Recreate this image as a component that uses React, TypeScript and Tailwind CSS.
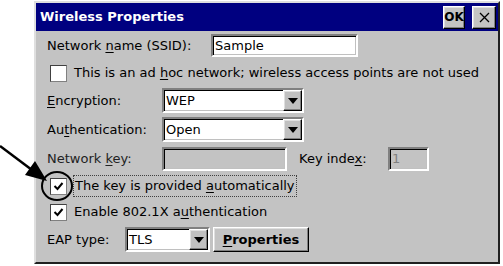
import React from "react";

const font = { fontFamily: '"DejaVu Sans", "Liberation Sans", sans-serif' };

// sunken 3D edit box
const sunken =
  "border-2 border-t-[#808080] border-l-[#808080] border-b-white border-r-white shadow-[inset_1px_1px_0_#000,inset_-1px_-1px_0_#c0c0c0]";
// raised 3D button
const raised =
  "border-t border-l border-t-white border-l-white border-b border-r border-b-black border-r-black shadow-[inset_-1px_-1px_0_#808080,inset_1px_1px_0_#dfdfdf]";

const U = ({ children }: { children: React.ReactNode }) => <span className="underline underline-offset-2">{children}</span>;

const Check = ({ checked }: { checked?: boolean }) => (
  <div className="w-[17px] h-[17px] bg-white flex items-center justify-center border border-t-[#404040] border-l-[#404040] border-b-[#808080] border-r-[#808080]">
    {checked && (
      <svg width="11" height="11" viewBox="0 0 11 11">
        <path d="M1.5 5 L4.5 8 L9.5 2" stroke="#000" strokeWidth="2" fill="none" />
      </svg>
    )}
  </div>
);

const Select = ({ value, width }: { value: string; width: string }) => (
  <div className={`${sunken} ${width} h-[25px] bg-white flex items-center`}>
    <span className="flex-1 pl-[2px] text-black">{value}</span>
    <div className={`${raised} w-[19px] h-full bg-[#c0c0c0] flex items-center justify-center`}>
      <svg width="10" height="6" viewBox="0 0 10 6">
        <path d="M0 0 H10 L5 6 Z" fill="#000" />
      </svg>
    </div>
  </div>
);

export default function App() {
  return (
    <div className="relative w-[503px] h-[266px] bg-white overflow-hidden text-[13px] text-black whitespace-nowrap" style={font}>
      <div className="ml-[34px] mt-[1px] w-[466px] h-[263px] bg-[#c3c3c3] border-2 border-t-[#dfdfdf] border-l-[#dfdfdf] border-b-[#202020] border-r-[#202020] flex flex-col">
        {/* title bar */}
        <div className="h-[28px] bg-[#000080] flex items-center pl-[4px] pr-[2px]">
          <span className="flex-1 text-white font-bold text-[13px]">Wireless Properties</span>
          <div className={`${raised} w-[22px] h-[23px] bg-[#c3c3c3] flex items-center justify-center font-bold text-[12px]`}>OK</div>
          <div className={`${raised} w-[24px] h-[23px] bg-[#c3c3c3] flex items-center justify-center ml-[7px]`}>
            <svg width="11" height="11" viewBox="0 0 11 11">
              <path d="M1 1 L10 10 M10 1 L1 10" stroke="#000" strokeWidth="1.3" />
            </svg>
          </div>
        </div>

        <div className="flex flex-col pl-[11px]">
          <div className="mt-[3px] h-[23px] flex items-center">
            <span className="w-[164px]">Network <U>n</U>ame (SSID):</span>
            <div className={`${sunken} w-[147px] h-[23px] bg-white flex items-center pl-[2px]`}>Sample</div>
          </div>

          <div className="mt-[4px] h-[24px] flex items-center">
            <div className="ml-[3px]"><Check /></div>
            <span className="ml-[7px]">This is an ad <U>h</U>oc network; wireless access points are not used</span>
          </div>

          <div className="mt-[3px] h-[25px] flex items-center">
            <span className="w-[115px]"><U>E</U>ncryption:</span>
            <Select value="WEP" width="w-[142px]" />
          </div>

          <div className="mt-[4px] h-[25px] flex items-center">
            <span className="w-[115px]">Au<U>t</U>hentication:</span>
            <Select value="Open" width="w-[142px]" />
          </div>

          <div className="mt-[5px] h-[24px] flex items-center">
            <span className="w-[115px] text-[#222]">Network <U>k</U>ey:</span>
            <div className={`${sunken} w-[125px] h-[24px] bg-[#c3c3c3]`} />
            <span className="ml-[12px] w-[89px]">Key inde<U>x</U>:</span>
            <div className={`${sunken} w-[41px] h-[24px] bg-[#c3c3c3] flex items-center pl-[2px] text-[#808080]`}>1</div>
          </div>

          <div className="mt-[4px] h-[22px] flex items-center">
            <div className="ml-[3px]"><Check checked /></div>
            <span className="ml-[6px] px-[1px] border border-dotted border-[#404040]">The key is provided <U>a</U>utomatically</span>
          </div>

          <div className="mt-[4px] h-[22px] flex items-center">
            <div className="ml-[3px]"><Check checked /></div>
            <span className="ml-[7px]">Enable 802.1X a<U>u</U>thentication</span>
          </div>

          <div className="mt-[4px] h-[25px] flex items-center">
            <span className="w-[78px]">EAP type:</span>
            <Select value="TLS" width="w-[85px]" />
            <div className={`${raised} ml-[3px] w-[96px] h-[25px] bg-[#c3c3c3] flex items-center justify-center font-bold text-[13px]`}>
              <span><U>P</U>roperties</span>
            </div>
          </div>
        </div>
      </div>

      {/* annotation arrow and circle */}
      <svg className="absolute left-0 top-0" width="503" height="266" viewBox="0 0 503 266">
        <line x1="0" y1="146" x2="32" y2="170" stroke="#000" strokeWidth="2.5" />
        <path d="M47 181 L25 175 L35 161 Z" fill="#000" />
        <ellipse cx="57" cy="186" rx="15" ry="14" fill="none" stroke="#000" strokeWidth="2" />
      </svg>
    </div>
  );
}
